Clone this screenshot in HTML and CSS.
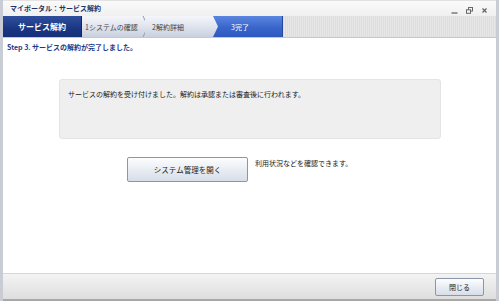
FILE: index.html
```html
<!DOCTYPE html>
<html lang="ja">
<head>
    <meta charset="UTF-8">
    <title>マイポータル：サービス解約</title>
    <link rel="stylesheet" href="styles.css">
</head>
<body>
    <div class="window">
        <div class="titlebar">
            <span class="title">マイポータル：サービス解約</span>
            <div class="controls">
                <svg width="7" height="7" viewBox="0 0 7 7"><path d="M0.5 6h6" stroke="#666" stroke-width="1.3"/></svg>
                <svg width="7" height="7" viewBox="0 0 7 7"><rect x="2.5" y="0.5" width="4" height="3.5" fill="none" stroke="#666" stroke-width="1"/><rect x="0.5" y="2.8" width="4" height="3.5" fill="#f4f4f4" stroke="#666" stroke-width="1"/></svg>
                <svg width="7" height="7" viewBox="0 0 7 7"><path d="M1.5 1.5l4 4M5.5 1.5l-4 4" stroke="#666" stroke-width="1.3"/></svg>
            </div>
        </div>

        <div class="steps">
            <div class="tab">サービス解約</div>
            <div class="step">1システムの確認
                <svg class="sep" width="7" height="21" viewBox="0 0 7 21"><path d="M1 0l5 10.5L1 21" fill="none" stroke="#8f9bb8" stroke-width="1"/></svg>
            </div>
            <div class="step step2">2解約詳細</div>
            <div class="step current">3完了</div>
            <div class="rest"></div>
        </div>

        <main class="content">
            <h2 class="heading">Step 3. サービスの解約が完了しました。</h2>
            <div class="message">サービスの解約を受け付けました。解約は承認または審査後に行われます。</div>
            <div class="action">
                <button class="btn big">システム管理を開く</button>
                <span class="note">利用状況などを確認できます。</span>
            </div>
        </main>

        <footer class="footer">
            <button class="btn small">閉じる</button>
        </footer>
    </div>
</body>
</html>
```

FILE: styles.css
```css
body {
    margin: 0;
    padding: 0;
    font-family: "Noto Sans CJK JP", "Liberation Sans", sans-serif;
    font-size: 7px;
    color: #222;
    background-color: #fff;
}

.window {
    width: 499px;
    height: 301px;
    box-sizing: border-box;
    border-left: 3px solid #c9ccd4;
    border-right: 3px solid #c9ccd4;
    display: flex;
    flex-direction: column;
    background-color: #fff;
}

.titlebar {
    height: 16px;
    display: flex;
    align-items: center;
    justify-content: space-between;
    padding: 0 8px 0 7px;
    background: linear-gradient(#fafafa, #f0f0f0);
    border-top: 1px solid #e2e2e2;
    box-sizing: border-box;
}

.title {
    font-weight: bold;
    color: #223366;
    margin-top: -2px;
}

.controls {
    display: flex;
    gap: 8px;
    margin-top: 3px;
}

.steps {
    height: 21px;
    display: flex;
    background: repeating-linear-gradient(90deg, #dedede 0, #dedede 1px, #e6e6e6 1px, #e6e6e6 2px);
    border-bottom: 1px solid #c8c8c8;
}

.tab {
    width: 79px;
    display: flex;
    align-items: center;
    justify-content: center;
    color: #fff;
    font-weight: bold;
    font-size: 8px;
    background: linear-gradient(#2f4f9e, #1a3682 60%, #15307a);
    border-right: 1px solid #0f2566;
    box-sizing: border-box;
}

.step {
    position: relative;
    display: flex;
    align-items: center;
    color: #444;
    background: linear-gradient(#f4f6fa, #dde2ec 55%, #c9d0de);
    box-sizing: border-box;
}

.tab + .step {
    width: 63px;
    padding-left: 3px;
}

.sep {
    position: absolute;
    right: -4px;
    top: 0;
}

.step2 {
    width: 73px;
    padding-left: 7px;
}

.current {
    width: 70px;
    margin-left: -5px;
    padding-left: 18px;
    color: #fff;
    background: linear-gradient(#5a86e0, #3a66cc 55%, #2e58bd);
    border-right: 1px solid #24479f;
    clip-path: polygon(0 0, 100% 0, 100% 100%, 0 100%, 5px 50%);
}

.rest {
    flex: 1;
}

.content {
    flex: 1;
    padding: 4px 0 0 4px;
}

.heading {
    margin: 0 0 27px;
    font-size: 7px;
    font-weight: bold;
    color: #1a3a8a;
    line-height: 10px;
}

.message {
    width: 382px;
    height: 60px;
    box-sizing: border-box;
    margin: 0 0 0 52px;
    padding: 9px 8px;
    background-color: #efefef;
    border: 1px solid #e4e4e4;
    border-radius: 3px;
    line-height: 10px;
}

.action {
    display: flex;
    align-items: flex-start;
    gap: 7px;
    margin: 18px 0 0 120px;
}

.btn {
    font-family: inherit;
    font-size: 7px;
    color: #222;
    border: 1px solid #8c96aa;
    border-radius: 2px;
    background: linear-gradient(#fdfdfe, #e9edf3 50%, #d8dee8);
    padding: 0;
    cursor: pointer;
}

.big {
    width: 121px;
    height: 25px;
    font-size: 7.5px;
}

.note {
    line-height: 10px;
    margin-top: 1px;
}

.footer {
    height: 28px;
    box-sizing: border-box;
    border-top: 1px solid #d6d6d6;
    border-bottom: 2px solid #a8a8a8;
    background: linear-gradient(#f3f3f3, #dedede);
    display: flex;
    align-items: center;
    justify-content: flex-end;
    padding-right: 12px;
}

.small {
    width: 49px;
    height: 18px;
}
```
